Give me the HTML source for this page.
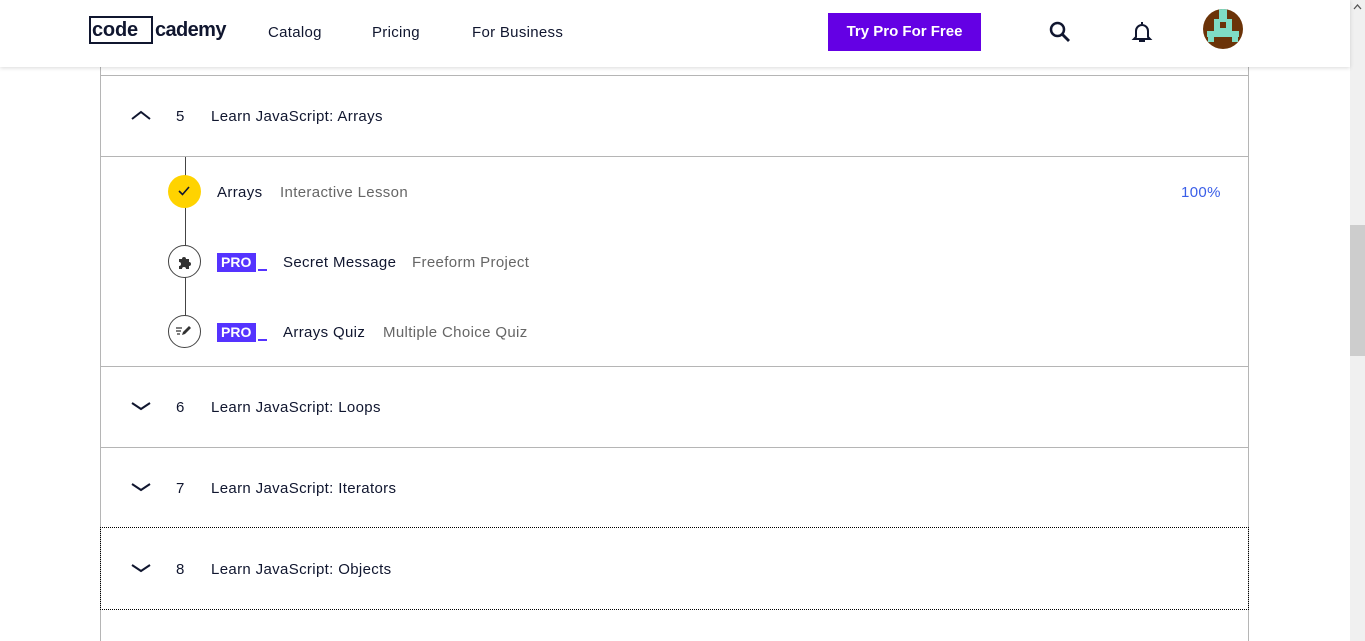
<!DOCTYPE html>
<html><head><meta charset="utf-8"><style>
*{margin:0;padding:0;box-sizing:border-box}
html,body{width:1365px;height:641px;overflow:hidden}
body{background:#fff;font-family:"Liberation Sans",sans-serif;color:#10162f;position:relative}
.a{position:absolute}
.hdr{left:0;top:0;width:1350px;height:67px;background:#fff;box-shadow:0 1px 4px rgba(0,0,0,.15);z-index:5}
.nav{font-size:15px;top:24px;color:#10162f;letter-spacing:0.3px}
.card{left:100px;top:60px;width:1149px;height:590px;border-left:1px solid #b5b5b5;border-right:1px solid #b5b5b5}
.hl{left:100px;width:1149px;height:1px;background:#b5b5b5}
.t{font-size:15px;color:#10162f;white-space:nowrap;letter-spacing:0.35px}
.g{color:#666}
.pro{background:#5533ff;color:#fff;font-weight:bold;font-size:14px;width:39px;height:19px;line-height:19px;padding-left:4px}
.und{width:9px;height:2px;background:#5533ff}
.circ{width:33px;height:33px;border-radius:50%;border:1px solid #444;background:#fff}
</style></head><body>
<div class="a hdr">
  <div class="a" style="left:89px;top:16px;height:28px;border:2px solid #10162f;width:64px"></div>
  <div class="a" style="left:92px;top:19px;font-size:20px;font-weight:bold;letter-spacing:-0.2px;color:#10162f">code</div>
  <div class="a" style="left:155px;top:19px;font-size:20px;font-weight:bold;letter-spacing:-0.6px;color:#10162f">cademy</div>
  <div class="a nav" style="left:268px">Catalog</div>
  <div class="a nav" style="left:372px">Pricing</div>
  <div class="a nav" style="left:472px">For Business</div>
  <div class="a" style="left:828px;top:13px;width:153px;height:38px;background:#6400e4;color:#fff;font-weight:bold;font-size:15px;text-align:center;line-height:38px">Try Pro For Free</div>
  <svg class="a" style="left:1048px;top:20px" width="24" height="24" viewBox="0 0 24 24"><circle cx="9.5" cy="9.5" r="6.5" fill="none" stroke="#10162f" stroke-width="2.5"/><line x1="14" y1="14" x2="21" y2="21" stroke="#10162f" stroke-width="2.8"/></svg>
  <svg class="a" style="left:1131px;top:20px" width="22" height="24" viewBox="0 0 22 24"><path d="M11 2v2M5 17V11a6 6 0 0 1 12 0v6l2 2H3z" fill="none" stroke="#10162f" stroke-width="2"/><path d="M8 21h6" stroke="#10162f" stroke-width="2"/></svg>
  <div class="a" style="left:1203px;top:9px;width:40px;height:40px;border-radius:50%;background:#6b3308;overflow:hidden">
    <div class="a" style="left:16px;top:0;width:8px;height:10px;background:#7fdcc4"></div>
    <div class="a" style="left:11px;top:10px;width:18px;height:12px;background:#7fdcc4"></div>
    <div class="a" style="left:17px;top:13px;width:6px;height:6px;background:#6b3308"></div>
    <div class="a" style="left:4px;top:22px;width:32px;height:6px;background:#7fdcc4"></div>
    <div class="a" style="left:5px;top:28px;width:30px;height:5px;background:#7fdcc4"></div>
    <div class="a" style="left:11px;top:28px;width:18px;height:5px;background:#6b3308"></div>
  </div>
</div>
<div class="a card"></div>
<div class="a hl" style="top:75px"></div>
<div class="a hl" style="top:156px"></div>
<div class="a hl" style="top:366px"></div>
<div class="a hl" style="top:447px"></div>
<div class="a" style="left:100px;top:527px;width:1149px;height:83px;border:1px dotted #000"></div>

<svg class="a" style="left:130px;top:109px" width="22" height="12"><path d="M2 10L11 3L20 10" fill="none" stroke="#10162f" stroke-width="2"/></svg>
<div class="a t" style="left:176px;top:108px">5</div>
<div class="a t" style="left:211px;top:108px">Learn JavaScript: Arrays</div>

<div class="a" style="left:185px;top:157px;width:1px;height:160px;background:#444"></div>
<div class="a" style="left:168px;top:175px;width:33px;height:33px;border-radius:50%;background:#ffd300"></div>
<svg class="a" style="left:177px;top:185px" width="14" height="12"><path d="M2 6l3.5 3.5L12 2" fill="none" stroke="#10162f" stroke-width="1.6"/></svg>
<div class="a t" style="left:217px;top:184px">Arrays</div>
<div class="a t g" style="left:280px;top:184px">Interactive Lesson</div>
<div class="a t" style="left:1181px;top:184px;color:#3a5ee8">100%</div>

<div class="a circ" style="left:168px;top:245px"></div>
<svg class="a" style="left:176px;top:254px" width="16" height="16" viewBox="0 0 16 16"><path d="M3 5h3a2 2 0 1 1 4 0h3v3a2 2 0 1 1 0 4v3H10a2 2 0 1 0-4 0H3v-3a2 2 0 1 0 0-4z" fill="#333"/></svg>
<div class="a pro" style="left:217px;top:253px">PRO</div><div class="a und" style="left:258px;top:269px"></div>
<div class="a t" style="left:283px;top:254px">Secret Message</div>
<div class="a t g" style="left:412px;top:254px">Freeform Project</div>

<div class="a circ" style="left:168px;top:315px"></div>
<svg class="a" style="left:175px;top:324px" width="18" height="14" viewBox="0 0 18 14"><path d="M1 4h6M1 7h5M2 10h3" stroke="#333" stroke-width="1.3"/><path d="M7 11l1-3 6-6 2 2-6 6z" fill="#333"/></svg>
<div class="a pro" style="left:217px;top:323px">PRO</div><div class="a und" style="left:258px;top:339px"></div>
<div class="a t" style="left:283px;top:324px">Arrays Quiz</div>
<div class="a t g" style="left:383px;top:324px">Multiple Choice Quiz</div>

<svg class="a" style="left:130px;top:400px" width="22" height="12"><path d="M2 3L11 9L20 3" fill="none" stroke="#10162f" stroke-width="2"/></svg>
<div class="a t" style="left:176px;top:399px">6</div>
<div class="a t" style="left:211px;top:399px">Learn JavaScript: Loops</div>
<svg class="a" style="left:130px;top:481px" width="22" height="12"><path d="M2 3L11 9L20 3" fill="none" stroke="#10162f" stroke-width="2"/></svg>
<div class="a t" style="left:176px;top:480px">7</div>
<div class="a t" style="left:211px;top:480px">Learn JavaScript: Iterators</div>
<svg class="a" style="left:130px;top:562px" width="22" height="12"><path d="M2 3L11 9L20 3" fill="none" stroke="#10162f" stroke-width="2"/></svg>
<div class="a t" style="left:176px;top:561px">8</div>
<div class="a t" style="left:211px;top:561px">Learn JavaScript: Objects</div>

<div class="a" style="left:1350px;top:0;width:15px;height:641px;background:#f0f0f0"></div>
<div class="a" style="left:1350px;top:225px;width:15px;height:131px;background:#cdcdcd"></div>
<svg class="a" style="left:1353px;top:4px" width="9" height="6"><path d="M1 5L4.5 1L8 5" fill="none" stroke="#555" stroke-width="1.3"/></svg>
</body></html>
